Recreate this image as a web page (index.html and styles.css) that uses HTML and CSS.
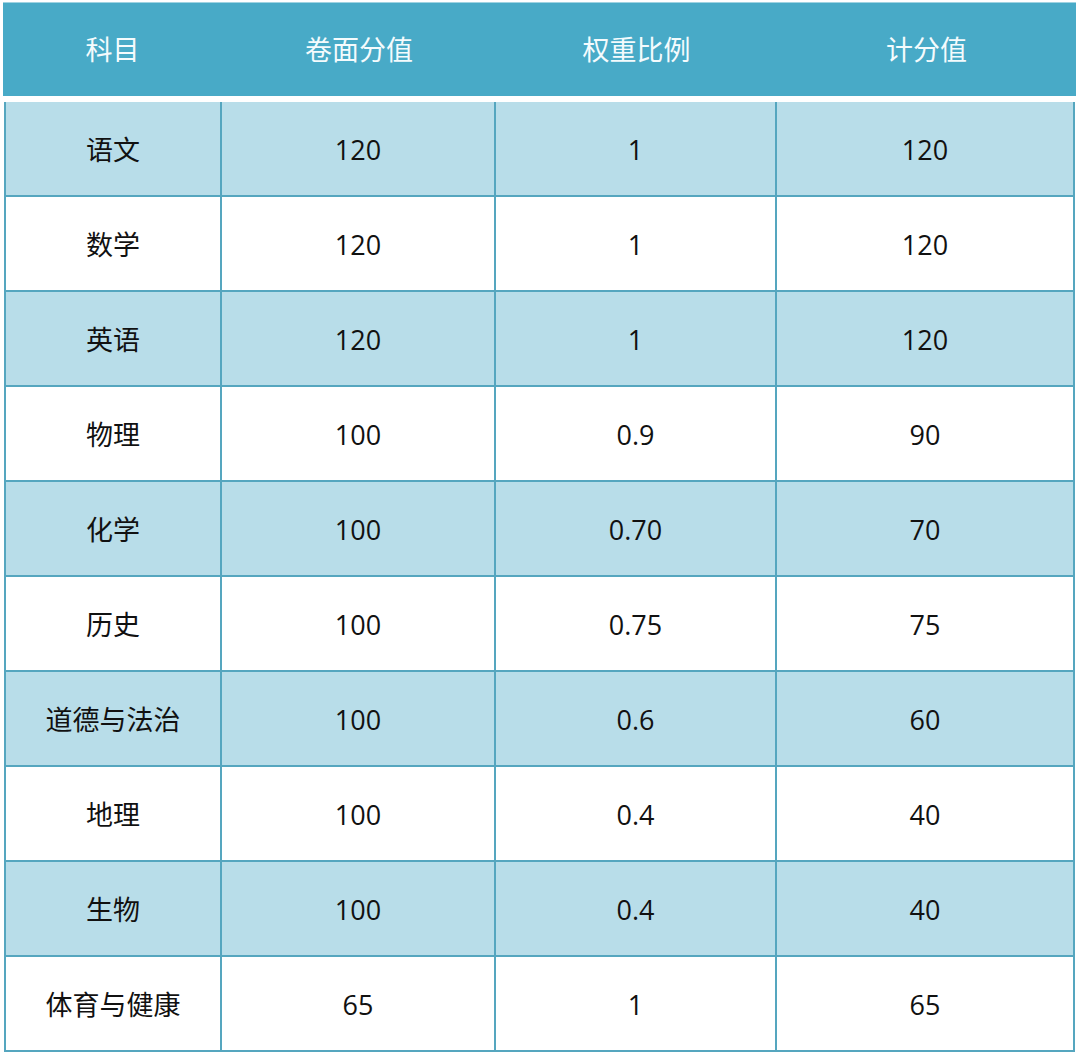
FILE: index.html
```html
<!DOCTYPE html>
<html lang="zh">
<head>
<meta charset="utf-8">
<title>计分表</title>
<link rel="stylesheet" href="styles.css">
</head>
<body>
<div class="sheet">
  <div class="head">
    <div class="hc">科目</div>
    <div class="hc">卷面分值</div>
    <div class="hc">权重比例</div>
    <div class="hc">计分值</div>
  </div>
  <table class="grid">
    <colgroup><col class="c1"><col class="c2"><col class="c3"><col class="c4"></colgroup>
    <tbody>
      <tr class="alt"><td>语文</td><td>120</td><td>1</td><td>120</td></tr>
      <tr><td>数学</td><td>120</td><td>1</td><td>120</td></tr>
      <tr class="alt"><td>英语</td><td>120</td><td>1</td><td>120</td></tr>
      <tr><td>物理</td><td>100</td><td>0.9</td><td>90</td></tr>
      <tr class="alt"><td>化学</td><td>100</td><td>0.70</td><td>70</td></tr>
      <tr><td>历史</td><td>100</td><td>0.75</td><td>75</td></tr>
      <tr class="alt"><td>道德与法治</td><td>100</td><td>0.6</td><td>60</td></tr>
      <tr><td>地理</td><td>100</td><td>0.4</td><td>40</td></tr>
      <tr class="alt"><td>生物</td><td>100</td><td>0.4</td><td>40</td></tr>
      <tr><td>体育与健康</td><td>65</td><td>1</td><td>65</td></tr>
    </tbody>
  </table>
</div>
</body>
</html>
```

FILE: styles.css
```css
html, body {
  margin: 0;
  padding: 0;
  background: #ffffff;
}
body {
  font-family: "Open Sans", "Noto Sans CJK SC", sans-serif;
  font-size: 27px;
  color: #111111;
}
.sheet {
  width: 1076px;
  padding-top: 2px;
}
.head {
  margin-left: 3px;
  width: 1073px;
  height: 94px;
  background: #48aac7;
  display: grid;
  grid-template-columns: 219px 274px 281px 299px;
  align-items: center;
  border-top: 1px solid #9fd3e2;
  box-sizing: border-box;
}
.hc {
  text-align: center;
  color: #f4fbfd;
  padding-bottom: 2px;
}
.grid {
  margin-top: 6px;
  margin-left: 4px;
  border-collapse: separate;
  border-spacing: 0;
  border-left: 2px solid #55a6bf;
  table-layout: fixed;
  width: 1071px;
}
.c1 { width: 216px; }
.c2 { width: 274px; }
.c3 { width: 281px; }
.c4 { width: 298px; }
.grid td {
  height: 92px;
  padding: 1px 0 0;
  box-sizing: content-box;
  text-align: center;
  vertical-align: middle;
  border-right: 2px solid #55a6bf;
  border-bottom: 2px solid #55a6bf;
  line-height: 1;
}
.grid tr.alt td {
  background: #b8dde9;
}
```
